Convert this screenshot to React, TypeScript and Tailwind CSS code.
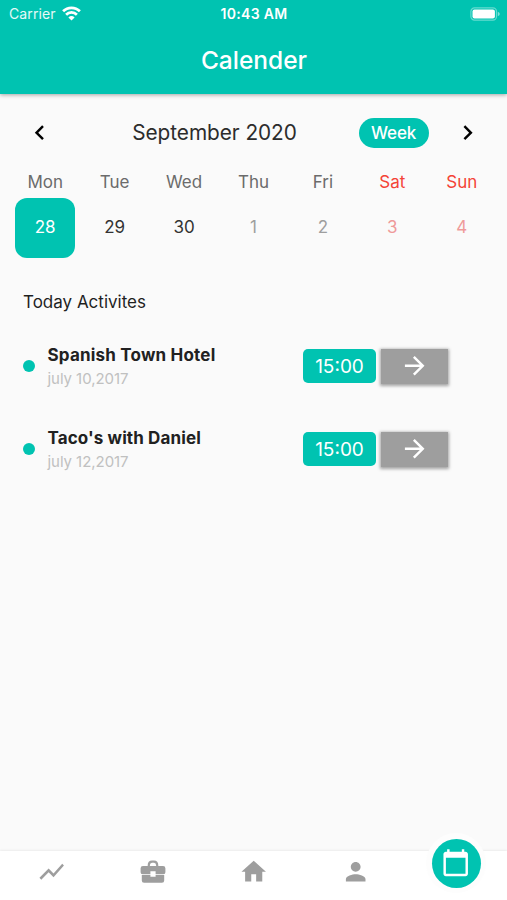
import React from 'react';
import {
  MdShowChart,
  MdHome,
  MdPerson,
  MdCalendarToday,
  MdChevronLeft,
  MdChevronRight,
  MdArrowForward,
} from 'react-icons/md';

const days = [
  { name: 'Mon', date: '28', head: 'text-[#6b6b6b]', tone: 'text-white bg-[#00c3b1]' },
  { name: 'Tue', date: '29', head: 'text-[#6b6b6b]', tone: 'text-[#333333]' },
  { name: 'Wed', date: '30', head: 'text-[#6b6b6b]', tone: 'text-[#333333]' },
  { name: 'Thu', date: '1', head: 'text-[#6b6b6b]', tone: 'text-[#9e9e9e]' },
  { name: 'Fri', date: '2', head: 'text-[#6b6b6b]', tone: 'text-[#9e9e9e]' },
  { name: 'Sat', date: '3', head: 'text-[#f44336]', tone: 'text-[#ef9a9a]' },
  { name: 'Sun', date: '4', head: 'text-[#f44336]', tone: 'text-[#ef9a9a]' },
];

const activities = [
  { title: 'Spanish Town Hotel', date: 'july 10,2017', time: '15:00', spacing: 'tracking-[0.2px]' },
  { title: "Taco's with Daniel", date: 'july 12,2017', time: '15:00', spacing: 'tracking-[0.12px]' },
];

function Briefcase() {
  return (
    <svg width="26" height="24" viewBox="0 0 26 24" className="mx-auto mt-[3px]">
      <path d="M8.8 7V5.2Q8.8 1.6 12 1.6h2q3.2 0 3.2 3.6V7" fill="none" stroke="currentColor" strokeWidth="2.2" />
      <path
        d="M3 5.9h20a2.4 2.4 0 0 1 2.4 2.4v3.9a2 2 0 0 1-2 2h-7.8v-3h-5.2v3H2.6a2 2 0 0 1-2-2V8.3A2.4 2.4 0 0 1 3 5.9z"
        fill="currentColor"
      />
      <path d="M1.8 15h8.6v1.7h5.2V15h8.6v5.4a2.3 2.3 0 0 1-2.3 2.3H4.1a2.3 2.3 0 0 1-2.3-2.3z" fill="currentColor" />
    </svg>
  );
}

function Header() {
  return (
    <header className="relative h-[94px] bg-[#00c3b1] text-white shadow-[0_1px_4px_rgba(0,0,0,0.35)]">
      <div className="grid h-[27px] grid-cols-3 items-center">
        <div className="flex items-center gap-[6px] pl-[9px] text-[14px] tracking-[0.1px] text-white/90">
          <span>Carrier</span>
          <svg width="19" height="15" viewBox="0 0 19 15" fill="none" stroke="white" strokeWidth="2.7">
            <path d="M1.1 5.3a11.8 11.8 0 0 1 16.8 0" />
            <path d="M4.1 8.7a7.5 7.5 0 0 1 10.8 0" />
            <path d="M9.5 14.5 6.4 11.5a4.5 4.5 0 0 1 6.2 0z" fill="white" stroke="none" />
          </svg>
        </div>
        <div className="pl-[1px] text-center text-[14px] font-semibold tracking-[0.3px]">10:43 AM</div>
        <div className="flex justify-end pr-[6px]">
          <svg width="31" height="14" viewBox="0 0 31 14">
            <rect x="0.9" y="0.9" width="25.6" height="12.2" rx="3.6" fill="none" stroke="white" strokeOpacity="0.4" strokeWidth="1.2" />
            <rect x="2.5" y="2.5" width="22.4" height="9" rx="2" fill="white" />
            <path d="M27.8 4.8q2 .7 2 2.2t-2 2.2z" fill="white" fillOpacity="0.5" />
          </svg>
        </div>
      </div>
      <h1 className="pt-[15px] pl-px text-center text-[24.5px] leading-[36px] font-medium">Calender</h1>
    </header>
  );
}

function Calendar() {
  return (
    <section>
      <div className="flex h-[78px] items-center pr-[25px] pl-[25px]">
        <MdChevronLeft size={29.4} className="text-black" />
        <div className="flex-1 pl-[16px] text-center text-[20.8px] tracking-[-0.05px] text-[#2c2c2c]">September 2020</div>
        <button className="mr-[24px] h-[30px] w-[70px] rounded-full bg-[#00c3b1] pt-px text-[17px] font-medium tracking-[-0.1px] text-white">Week</button>
        <MdChevronRight size={29.4} className="text-black" />
      </div>
      <div className="grid grid-cols-7 px-[10.5px]">
        {days.map((d) => (
          <div key={d.name} className="flex flex-col items-center text-[17px]">
            <span className={`h-[25.5px] leading-[20px] ${d.head}`}>{d.name}</span>
            <span className={`flex size-[60px] items-center justify-center rounded-[12px] ${d.tone}`}>{d.date}</span>
          </div>
        ))}
      </div>
    </section>
  );
}

function Activities() {
  return (
    <section className="px-[23px] pt-[33.5px]">
      <h2 className="text-[17px] leading-[22px] text-[#1f1f1f]">Today Activites</h2>
      <div className="mt-[11px]">
        {activities.map((a) => (
          <div key={a.title} className="flex h-[83px] items-center">
            <span className="mr-[12.5px] size-[12px] rounded-full bg-[#00c3b1]" />
            <div className="w-[255.5px] pt-[2px]">
              <div className={`text-[17px] leading-[24px] font-bold text-[#212121] ${a.spacing}`}>{a.title}</div>
              <div className="text-[15px] leading-[24px] tracking-[-0.05px] text-[#c0c0c0]">{a.date}</div>
            </div>
            <span className="flex h-[34px] w-[73px] items-center justify-center rounded-[5px] bg-[#00c3b1] pt-[3px] text-[19px] text-white">{a.time}</span>
            <button className="mt-px ml-[5px] flex h-[35px] w-[67px] items-center justify-center bg-[#9e9e9e] text-white shadow-[0_1px_3px_1px_rgba(0,0,0,0.35)]">
              <MdArrowForward size={29.4} />
            </button>
          </div>
        ))}
      </div>
    </section>
  );
}

function BottomNav() {
  return (
    <nav className="relative grid h-[49px] grid-cols-5 bg-white pt-[6px] pl-px text-[#9e9e9e] shadow-[0_-1px_2px_rgba(0,0,0,0.06)]">
      <MdShowChart size={29.4} className="mx-auto" />
      <Briefcase />
      <MdHome size={29.4} className="mx-auto" />
      <MdPerson size={29.4} className="mx-auto" />
      <div className="absolute top-[-18px] left-[426px] flex size-[60px] items-center justify-center rounded-full bg-[#fdfdfd]">
        <div className="flex size-[49px] items-center justify-center rounded-full bg-[#00c3b1] text-white">
          <MdCalendarToday size={29.4} />
        </div>
      </div>
    </nav>
  );
}

export default function App() {
  return (
    <div className="flex h-[900px] w-[507px] flex-col overflow-hidden bg-[#fafafa] font-['Inter','Liberation_Sans',sans-serif]">
      <Header />
      <main className="flex-1">
        <Calendar />
        <Activities />
      </main>
      <BottomNav />
    </div>
  );
}
